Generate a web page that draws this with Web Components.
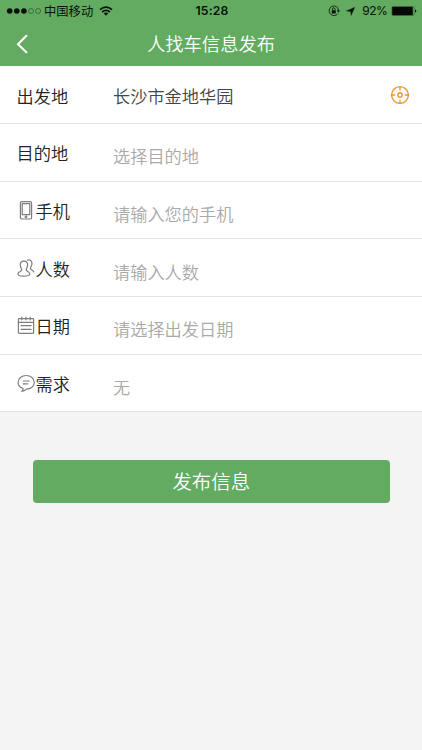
<!DOCTYPE html>
<html lang="zh-CN">
<head>
<meta charset="utf-8">
<title>人找车信息发布</title>
<style>
body{margin:0;background:#f4f4f4;font-family:"Noto Sans CJK SC",sans-serif}
</style>
</head>
<body>
<ride-app></ride-app>
<script>
const define=(name,html)=>customElements.define(name,class extends HTMLElement{
  constructor(){super();this.attachShadow({mode:'open'}).innerHTML=html;}
});

define('status-bar',`<style>
:host{display:grid;grid-template-columns:1fr auto 1fr;height:22px;align-items:center;color:#071007;font-size:12.3px;line-height:22px;box-sizing:border-box;padding:0 5px 0 6px}
svg{display:block;flex:none}
.l,.r{display:flex;align-items:center}
.r{justify-content:flex-end}
.l span{margin:0 6px 0 2px}
.time{font:600 12.2px/22px Inter,sans-serif;letter-spacing:.2px;padding-left:1px}
.pct{font:400 12px/22px Inter,sans-serif;letter-spacing:-.4px;margin:0 3.5px 0 7px}
</style>
<div class="l">
<svg width="36" height="8" viewBox="0 0 36 8"><g fill="#071007"><circle cx="3.7" cy="4" r="2.8"/><circle cx="10.8" cy="4" r="2.8"/><circle cx="17.9" cy="4" r="2.8"/></g><g fill="none" stroke="#234a23" stroke-width=".6"><circle cx="25" cy="4" r="2.5"/><circle cx="32.1" cy="4" r="2.5"/></g></svg>
<span>中国移动</span>
<svg width="14" height="10" viewBox="0 0 14 10"><g fill="none" stroke="#071007" stroke-width="1.7"><path d="M1 3.7Q7-1.6 13 3.7"/><path d="M3.2 6Q7 2.8 10.8 6"/></g><path d="M4.8 7.3Q7 5.6 9.2 7.3L7 9.7Z" fill="#071007"/></svg>
</div>
<div class="time">15:28</div>
<div class="r">
<svg width="12" height="12" viewBox="0 0 12 12"><path d="M9.9 3A4.8 4.8 0 1 0 10 8.4M10.3 6.5V5A4.8 4.8 0 0 0 9.8 3" fill="none" stroke="#071007" stroke-width=".8"/><path d="M8.8 5.5H12L10.4 7.5Z" fill="#071007"/><path d="M3.8 5.3H7.7V8.5H3.8Z" fill="#071007"/><path d="M4.5 5.4V4.1A1.25 1.25 0 0 1 7 4.1V5.4" fill="none" stroke="#071007" stroke-width=".8"/></svg>
<svg width="9" height="9" viewBox="0 0 9 9" style="margin-left:6.5px"><path d="M8.8.3L5.1 8.5L4.6 4.5L.3 4Z" fill="#071007" stroke="#071007" stroke-width=".3"/></svg>
<span class="pct">92%</span>
<svg width="26" height="10" viewBox="0 0 26 10"><rect x=".8" y=".3" width="22.4" height="9.4" rx="1.6" fill="none" stroke="#284f28" stroke-width=".5"/><rect x="1.2" y=".8" width="20.6" height="8.4" rx=".8" fill="#050805"/><path d="M24 3.4Q25.3 3.7 25.3 5T24 6.6Z" fill="#071007"/></svg>
</div>`);

define('nav-bar',`<style>
:host{display:grid;grid-template-columns:44px 1fr 44px;height:44px;align-items:center;color:#fff}
svg{display:block;margin-left:16px}
h1{margin:0;font-size:18.3px;font-weight:350;line-height:42px;height:44px;text-align:center}
</style>
<svg width="13" height="20" viewBox="0 0 13 20"><path d="M10.4 1.8L2 10.2L10.4 18.3" fill="none" stroke="#fff" stroke-width="2.1" stroke-linecap="round"/></svg>
<h1><slot></slot></h1>`);

define('form-row',`<style>
:host{display:grid;grid-template-columns:96.5px 1fr auto;align-items:center;height:57.67px;box-sizing:border-box;border-bottom:1px solid #e3e3e3;background:#fff;padding:0 12px 0 16.5px;font-size:17.2px;line-height:26px;--drop:5px;--tone:#a9a9a9}
:host([filled]){--tone:#444;--drop:0px}
.label{display:flex;align-items:center;color:#222;font-weight:350;height:26px;padding-top:2px}
.value{color:var(--tone);font-weight:350;padding-top:calc(var(--drop) + 3px)}
</style>
<div class="label"><slot name="icon"></slot><slot></slot></div>
<div class="value"><slot name="value"></slot></div>
<slot name="action"></slot>`);

const icons={
phone:'<rect x="3.4" y=".6" width="11.2" height="17.4" rx="1.6"/><rect x="5.2" y="2.7" width="7.6" height="11"/><circle cx="9" cy="15.8" r=".8"/>',
people:'<path d="M6.9 2.2C4.1 2.2 3 4 3.3 6.5C3.6 8.7 4.5 9.5 4.8 10.5C5.1 12.5.9 12.5.9 15C.9 16.9 3.5 17.1 6.8 17.1S12.8 16.9 12.8 15.1C12.8 12.6 9 12.5 9.2 10.5C9.4 9.5 10.4 8.7 10.6 6.5C10.9 4 9.7 2.2 6.9 2.2Z"/><path d="M10.4 1.2C13.1.2 15.3 2 14.9 5C14.7 7.3 13.4 8.1 13.4 9.3C13.4 11.1 16 10.8 16.8 13"/>',
calendar:'<rect x="1.4" y="2.7" width="15.2" height="14.6" rx=".8"/><path d="M1.4 6.4H16.6M4 9.7H14M4 13.3H14M4.8 1V3.8M9 1V3.8M13.2 1V3.8"/>',
chat:'<path d="M6 14.4C3.1 13.4 1.1 11.1 1.1 8.4C1.1 4.5 4.7 1.5 9.2 1.5S17.3 4.5 17.3 8.4S13.8 15.1 9.5 15.2C8.3 16.5 6.8 17 4.9 17.3C5.8 16.5 6.2 15.5 6 14.4Z"/><path d="M6.2 7H12.3M6.2 9.8H10.6"/>',
target:'<g stroke="#ec9438" stroke-width="1.4"><circle cx="10" cy="10" r="8.4"/><circle cx="10" cy="10" r="2.2"/><path d="M10 1.6V4.8M10 15.2V18.4M1.6 10H4.8M15.2 10H18.4"/></g>'
};
customElements.define('line-icon',class extends HTMLElement{
  connectedCallback(){
    if(this.shadowRoot)return;
    const name=this.getAttribute('name'),w=name==='target'?20:19;
    this.attachShadow({mode:'open'}).innerHTML=`<style>:host{display:block;width:${w}px;height:20px;flex:none}svg{display:block;fill:none;stroke:#7e7e7e;stroke-width:1.2;stroke-linecap:round;stroke-linejoin:round}</style><svg width="${w}" height="20" viewBox="0 0 ${w} 20">${icons[name]}</svg>`;
  }
});

define('submit-button',`<style>
:host{display:block;margin:48px 32px 0 32.5px}
button{display:block;width:100%;height:43px;border:0;border-radius:4px;padding:0;background:#62ab60;color:#fff;font:350 19.4px/41px "Noto Sans CJK SC",sans-serif}
button span{display:block;height:43px}
</style><button><span><slot></slot></span></button>`);

define('ride-app',`<style>
:host{display:block;min-height:750px;background:#f4f4f4}
header{height:66.4px;background:#62ab60}
</style>
<header><status-bar></status-bar><nav-bar>人找车信息发布</nav-bar></header>
<main>
<form-row filled>出发地<span slot="value">长沙市金地华园</span><line-icon slot="action" name="target"></line-icon></form-row>
<form-row>目的地<span slot="value">选择目的地</span></form-row>
<form-row><line-icon slot="icon" name="phone"></line-icon>手机<span slot="value">请输入您的手机</span></form-row>
<form-row><line-icon slot="icon" name="people"></line-icon>人数<span slot="value">请输入人数</span></form-row>
<form-row><line-icon slot="icon" name="calendar"></line-icon>日期<span slot="value">请选择出发日期</span></form-row>
<form-row><line-icon slot="icon" name="chat"></line-icon>需求<span slot="value">无</span></form-row>
<submit-button>发布信息</submit-button>
</main>`);
</script>
</body>
</html>
